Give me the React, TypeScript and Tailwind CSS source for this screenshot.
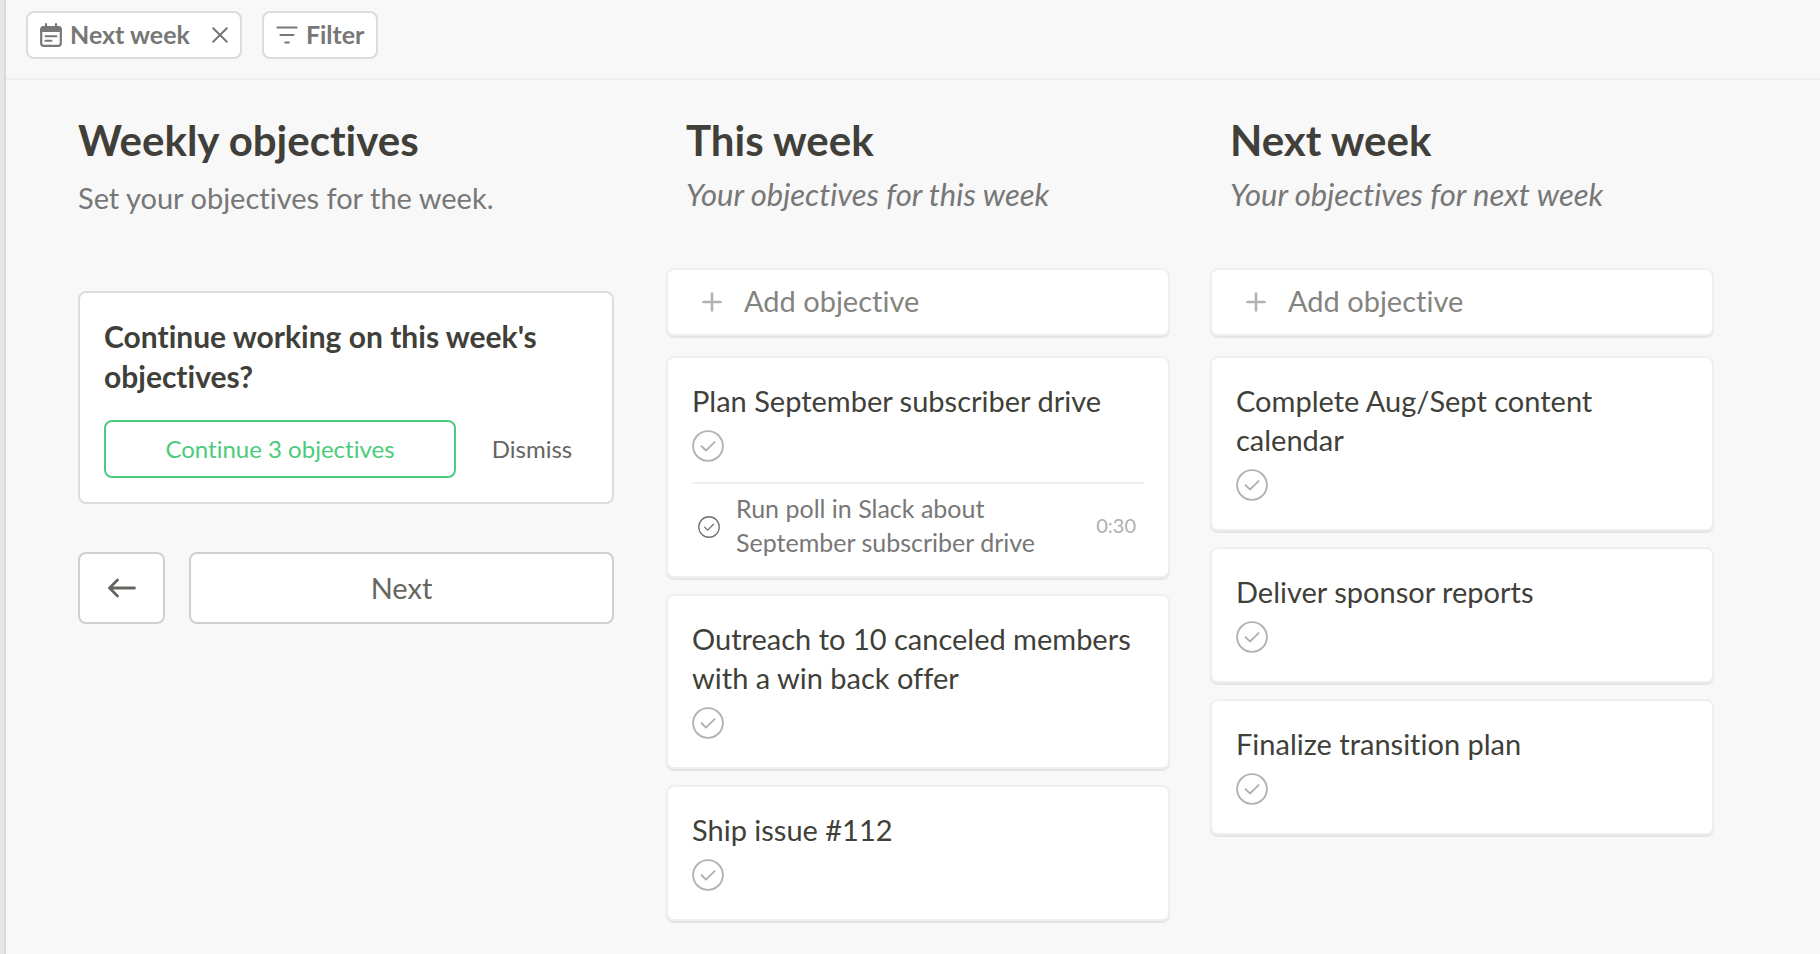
import { useState } from "react";
import type { ReactNode } from "react";

type Task = { title: string; time: string };
type Objective = { title: string; tasks?: Task[] };

const thisWeek: Objective[] = [
  {
    title: "Plan September subscriber drive",
    tasks: [{ title: "Run poll in Slack about September subscriber drive", time: "0:30" }],
  },
  { title: "Outreach to 10 canceled members with a win back offer" },
  { title: "Ship issue #112" },
];

const nextWeek: Objective[] = [
  { title: "Complete Aug/Sept content calendar" },
  { title: "Deliver sponsor reports" },
  { title: "Finalize transition plan" },
];

const CalendarIcon = () => (
  <svg className="w-[22px] h-6" viewBox="0 0 22 24" fill="none" stroke="currentColor" strokeLinecap="round">
    <rect x="1.2" y="4" width="19.6" height="18.8" rx="2.6" strokeWidth="2.2" />
    <path d="M.4 9V6.3A3.4 3.4 0 0 1 3.6 3h14.8a3.4 3.4 0 0 1 3.2 3.3V9z" fill="currentColor" stroke="none" />
    <path d="M6 1.2v3M16 1.2v3" strokeWidth="2.2" />
    <path d="M5.5 13.2h11M5.5 17.8h6" strokeWidth="2" />
  </svg>
);

const CloseIcon = () => (
  <svg className="w-4 h-4" viewBox="0 0 16 16" fill="none" stroke="currentColor" strokeWidth="2" strokeLinecap="round">
    <path d="M1.2 1.2l13.6 13.6M14.8 1.2L1.2 14.8" />
  </svg>
);

const FilterIcon = () => (
  <svg className="w-[22px] h-[18px]" viewBox="0 0 22 18" fill="none" stroke="currentColor" strokeWidth="2.2" strokeLinecap="round">
    <path d="M1.5 1.5h19M4.5 9h13M9.2 16.5h3.6" />
  </svg>
);

const CheckToggle = ({ label, small = false }: { label: string; small?: boolean }) => {
  const [done, setDone] = useState(false);

  return (
    <label className={small ? "relative block mt-1 text-[#707070] cursor-pointer" : "relative block w-fit text-[#b3b3b3] cursor-pointer"}>
      <input
        type="checkbox"
        className="sr-only"
        aria-label={`Complete ${label}`}
        checked={done}
        onChange={(e) => setDone(e.target.checked)}
      />
      <svg
        className={small ? "w-[22px] h-[22px]" : "w-8 h-8"}
        viewBox="0 0 32 32"
        fill="none"
        stroke={done ? "#4ccb7c" : "currentColor"}
        strokeWidth="1.9"
        strokeLinecap="round"
        strokeLinejoin="round"
      >
        <circle cx="16" cy="16" r="14.9" />
        <path d="M9.6 16.2l4.4 4.3 8.6-8.4" />
      </svg>
    </label>
  );
};

const Card = ({ children }: { children: ReactNode }) => (
  <li className="bg-white border-2 border-[#efefef] rounded-lg shadow-[0_2px_1px_rgba(0,0,0,0.08)] px-6">
    {children}
  </li>
);

const ObjectiveCard = ({ objective }: { objective: Objective }) => (
  <Card>
    <div className={objective.tasks ? "pt-[23px] pb-5" : "pt-[23px] pb-7"}>
      <h3 className="text-[29px] leading-[39px] text-[#403f39]">{objective.title}</h3>
      <div className="mt-[10px]">
        <CheckToggle label={objective.title} />
      </div>
    </div>
    {objective.tasks?.map((task) => (
      <div key={task.title} className="flex items-center border-t-2 border-[#efefef] pt-[7px] pb-[17px] pl-[6px] pr-2">
        <CheckToggle label={task.title} small />
        <p className="flex-1 ml-4 mr-12 text-[25px] leading-[34px] text-[#777777]">{task.title}</p>
        <span className="text-xl text-[#b0b0b0]">{task.time}</span>
      </div>
    ))}
  </Card>
);

const WeekColumn = ({ title, subtitle, objectives }: { title: string; subtitle: string; objectives: Objective[] }) => (
  <section className="flex-1 min-w-0">
    <div className="pl-5 h-[148px]">
      <h2 className="text-[42px] leading-10 font-bold text-[#403f39]">{title}</h2>
      <p className="mt-[14px] text-[31px] leading-10 italic text-[#777777]">{subtitle}</p>
    </div>
    <button className="w-full h-[68px] mb-5 flex items-center bg-white border-2 border-[#efefef] rounded-lg shadow-[0_2px_1px_rgba(0,0,0,0.08)] pl-[34px] text-[29px] text-[#84847f]">
      <svg className="w-5 h-5 mr-[22px] text-[#b3b3b3]" viewBox="0 0 20 20" stroke="currentColor" strokeWidth="2.6" strokeLinecap="round">
        <path d="M10 1.5v17M1.5 10h17" />
      </svg>
      <span className="pb-0.5">Add objective</span>
    </button>
    <ul className="flex flex-col gap-4">
      {objectives.map((objective) => (
        <ObjectiveCard key={objective.title} objective={objective} />
      ))}
    </ul>
  </section>
);

export default function App() {
  return (
    <div className="min-h-screen flex bg-[#f8f8f8] font-[Lato,sans-serif] [font-variant-ligatures:no-common-ligatures]">
      {/* Sidebar edge */}
      <div className="w-[6px] shrink-0 bg-[#e6e7ea] border-r-2 border-[#d8d9db]" />

      <div className="flex-1 min-w-0">
        <header className="flex items-center gap-5 pl-5 pt-[11px] pb-[19px] border-b-2 border-[#efefef] text-[25px] font-bold text-[#777777]">
          <div className="h-12 flex items-center bg-white border-2 border-[#dcdcdc] rounded-lg px-3">
            <CalendarIcon />
            <span className="ml-2">Next week</span>
            <button aria-label="Clear date" className="ml-[22px]">
              <CloseIcon />
            </button>
          </div>
          <button className="h-12 flex items-center gap-2 bg-white border-2 border-[#dcdcdc] rounded-lg px-3">
            <FilterIcon />
            Filter
          </button>
        </header>

        <main className="flex gap-[52px] pl-[72px] pr-[106px] pt-10 pb-8">
          <section className="flex-[536] min-w-0">
            <h1 className="text-[42px] leading-10 font-bold text-[#403f39]">Weekly objectives</h1>
            <p className="mt-[18px] text-[29px] leading-10 text-[#777777]">Set your objectives for the week.</p>

            <div className="mt-[73px] bg-white border-2 border-[#dcdcdc] rounded-lg px-6 pt-[23px] pb-6">
              <h2 className="text-[30px] leading-10 font-bold text-[#403f39]">
                Continue working on this week's objectives?
              </h2>
              <div className="mt-6 flex items-center">
                <button className="w-[352px] h-[58px] border-2 border-[#4ccb7c] rounded-lg text-2xl text-[#4ccb7c]">
                  Continue 3 objectives
                </button>
                <button className="flex-1 pl-5 text-2xl text-[#666661]">Dismiss</button>
              </div>
            </div>

            <div className="mt-12 flex gap-6 text-[29px] text-[#666661]">
              <button aria-label="Back" className="w-[87px] h-[72px] flex items-center justify-center bg-white border-2 border-[#d0d0d0] rounded-lg">
                <svg className="w-7 h-5" viewBox="0 0 28 20" fill="none" stroke="currentColor" strokeWidth="2.8" strokeLinecap="round" strokeLinejoin="round">
                  <path d="M26.5 10H1.5M9.5 2l-8 8 8 8" />
                </svg>
              </button>
              <button className="flex-1 h-[72px] bg-white border-2 border-[#d0d0d0] rounded-lg">Next</button>
            </div>
          </section>

          <div className="flex-[1048] min-w-0 flex gap-10">
            <WeekColumn title="This week" subtitle="Your objectives for this week" objectives={thisWeek} />
            <WeekColumn title="Next week" subtitle="Your objectives for next week" objectives={nextWeek} />
          </div>
        </main>
      </div>
    </div>
  );
}
